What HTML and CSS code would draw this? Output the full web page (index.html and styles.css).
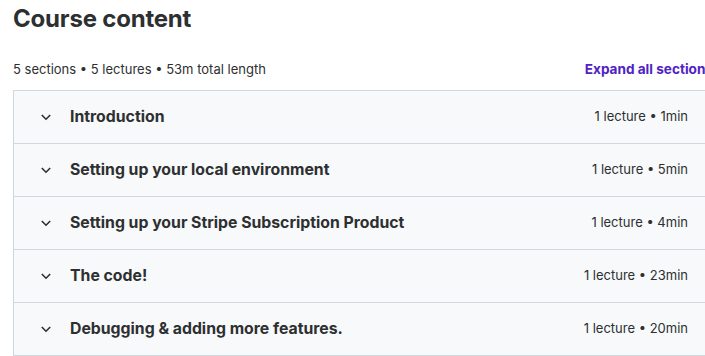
FILE: index.html
```html
<!DOCTYPE html>
<html lang="en">
<head>
<meta charset="utf-8">
<title>Course content</title>
<link rel="stylesheet" href="styles.css">
</head>
<body>
<div class="page">
  <h2 class="title">Course content</h2>
  <div class="meta">
    <span class="stats">5 sections • 5 lectures • 53m total length</span>
    <button class="expand">Expand all sections</button>
  </div>
  <div class="sections">
    <div class="section">
      <svg class="chev" viewBox="0 0 16 16"><path d="M3.8 6 8 10.2 12.2 6" /></svg>
      <span class="name">Introduction</span>
      <span class="info">1 lecture • 1min</span>
    </div>
    <div class="section">
      <svg class="chev" viewBox="0 0 16 16"><path d="M3.8 6 8 10.2 12.2 6" /></svg>
      <span class="name">Setting up your local environment</span>
      <span class="info">1 lecture • 5min</span>
    </div>
    <div class="section">
      <svg class="chev" viewBox="0 0 16 16"><path d="M3.8 6 8 10.2 12.2 6" /></svg>
      <span class="name">Setting up your Stripe Subscription Product</span>
      <span class="info">1 lecture • 4min</span>
    </div>
    <div class="section">
      <svg class="chev" viewBox="0 0 16 16"><path d="M3.8 6 8 10.2 12.2 6" /></svg>
      <span class="name">The code!</span>
      <span class="info">1 lecture • 23min</span>
    </div>
    <div class="section">
      <svg class="chev" viewBox="0 0 16 16"><path d="M3.8 6 8 10.2 12.2 6" /></svg>
      <span class="name">Debugging &amp; adding more features.</span>
      <span class="info">1 lecture • 20min</span>
    </div>
  </div>
</div>
</body>
</html>
```

FILE: styles.css
```css
html, body {
  margin: 0;
  padding: 0;
  background: #ffffff;
  overflow: hidden;
}
body {
  font-family: Inter, "Noto Sans", sans-serif;
  color: #2d2f31;
}
.page {
  width: 700px;
  padding-left: 13px;
}
.title {
  margin: 0;
  padding-top: 4px;
  font-size: 24px;
  line-height: 30px;
  font-weight: 700;
  letter-spacing: -0.2px;
}
.meta {
  display: flex;
  justify-content: space-between;
  align-items: center;
  margin-top: 22px;
  height: 26px;
  margin-bottom: 8px;
}
.stats {
  font-size: 13px;
}
.expand {
  border: 0;
  background: none;
  padding: 0;
  font-family: inherit;
  font-size: 13.6px;
  font-weight: 700;
  color: #5022c3;
  white-space: nowrap;
}
.sections {
  border: 1px solid #d1d7dc;
  border-bottom: 0;
}
.section {
  display: flex;
  align-items: center;
  height: 52px;
  padding: 0 24px;
  background: #f7f9fa;
  border-bottom: 1px solid #d1d7dc;
}
.chev {
  width: 16px;
  height: 16px;
  flex: none;
  margin-right: 16px;
  margin-top: -1px;
  fill: none;
  stroke: #2d2f31;
  stroke-width: 1.6;
}
.name {
  flex: 1;
  font-size: 15.8px;
  font-weight: 700;
  margin-top: -2px;
}
.info {
  font-size: 13px;
  white-space: nowrap;
  margin-top: -2px;
}
```
